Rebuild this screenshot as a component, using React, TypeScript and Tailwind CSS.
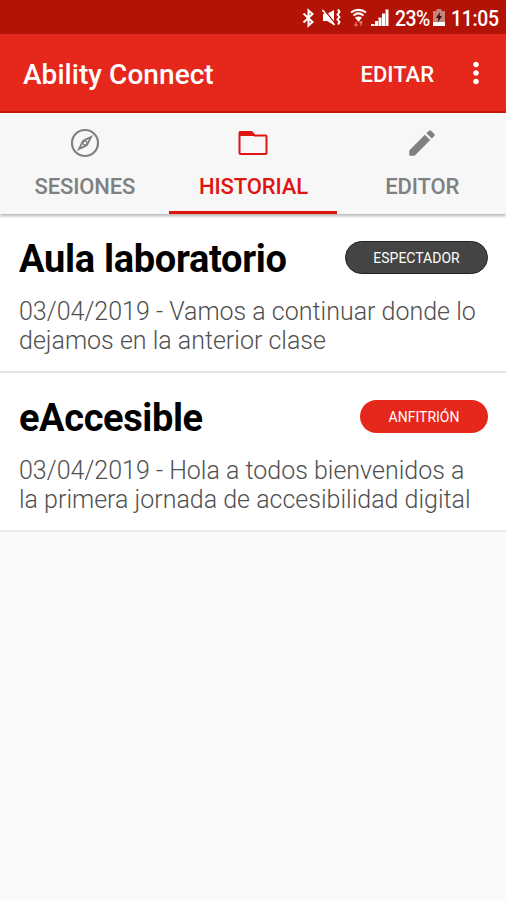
import { MdEdit, MdMoreVert } from "react-icons/md";

const CompassIcon = ({ className }: { className?: string }) => (
  <svg className={className} viewBox="0 0 34 34" fill="none" stroke="currentColor">
    <circle cx="17" cy="17" r="13" strokeWidth="2.200" />
    <path d="M23 11l-4 8-8 4 4-8z" strokeWidth="1.800" />
    <path d="M23 11l-6 2.500-2 1.500M11 23l6-2.500 2-1.500" strokeWidth="1.200" />
    <circle cx="17" cy="17" r="2" strokeWidth="1.300" />
  </svg>
);

const FolderIcon = ({ className }: { className?: string }) => (
  <svg className={className} viewBox="0 0 34 34" fill="none" stroke="currentColor" strokeWidth="2">
    <path d="M5 6h10.500l3 3.500H29.500a1 1 0 0 1 1 1V27a1 1 0 0 1-1 1h-25a1 1 0 0 1-1-1V7a1 1 0 0 1 1-1z" />
    <path d="M4 6.500h11.500l2 2.500H4z" fill="currentColor" />
  </svg>
);

const StatusBar = () => {
  return (
    <div className="flex h-[34px] items-center bg-[#b31207] pl-[302px] pt-px text-white">
      {/* bluetooth */}
      <svg className="h-[20px] w-[13px]" viewBox="0 0 13 20" fill="none" stroke="currentColor" strokeWidth="2">
        <path d="M1.500 5.500l9 8.500-4 3.500V2.500l4 3.500-9 8.500" />
      </svg>

      {/* vibrate / muted */}
      <svg className="ml-[6px] h-[20px] w-[20px]" viewBox="0 0 20 20" fill="none">
        <path d="M2 6h4l7-4v15l-7-4H2z" fill="currentColor" />
        <path d="M3 1.500l11 14" stroke="#b31207" strokeWidth="1.300" />
        <path d="M1.500 2l12 15" stroke="currentColor" strokeWidth="1.700" />
        <path d="M17 1.500l1.500 2.500-2 2.500 2 2.500-2 2.500 2 2.500-1.500 2.500" stroke="currentColor" strokeWidth="2" />
      </svg>

      {/* wifi */}
      <svg className="ml-[9px] h-[20px] w-[17px]" viewBox="0 0 17 20" fill="none" stroke="currentColor">
        <path d="M1 4.500c4.500-3.500 10.500-3.500 15 0M3.500 7.500c3-2.500 7-2.500 10 0" strokeWidth="2.200" />
        <path d="M5 9.500c2-1.500 5-1.500 7 0L8.500 14z" fill="currentColor" stroke="none" />
        <path d="M6 14v4M4.500 16.500L6 18l1.500-1.500M11 18v-4M9.500 15l1.500-1.500 1.500 1.500" stroke="#e87670" strokeWidth="1.200" />
      </svg>

      {/* signal */}
      <svg className="ml-[4px] h-[20px] w-[20px]" viewBox="0 0 20 20" fill="currentColor">
        <path d="M0 16h3.500v2H0zM4 13h3v5H4zM7.500 9.500h3V18h-3zM11 5.500h3V18h-3zM14.500 1.500h3V18h-3z" />
      </svg>

      <span className="ml-[4px] w-[35px] whitespace-nowrap pt-[2px] text-[22px] leading-none font-medium">
        <span className="inline-block origin-left scale-x-[0.88] tracking-[-0.6px]">23%</span>
      </span>

      {/* battery */}
      <svg className="ml-[3px] h-[20px] w-[12px]" viewBox="0 0 12 20">
        <path d="M3.500 1h5v2H12v11H0V3h3.500z" fill="#c4847a" />
        <path d="M0 14h12v4H0z" fill="#fff" />
        <path d="M7 4l-4 6h2.500l-1 5 4.500-7H6.500z" fill="#3b100c" />
      </svg>

      <span className="ml-[6px] whitespace-nowrap pt-[2px] text-[22px] leading-none font-medium">
        <span className="inline-block origin-left scale-x-[0.88] tracking-[-0.3px]">11:05</span>
      </span>
    </div>
  );
};

const AppBar = () => {
  return (
    <header className="flex h-[79px] items-center border-b-2 border-[#c5180d] bg-[#e6271b] pl-[23px] pr-[13px] pt-1 font-medium text-white">
      <h1 className="flex-1 whitespace-nowrap text-[28px] leading-none tracking-[0.05px]">Ability Connect</h1>
      <button className="mr-[25px] whitespace-nowrap text-[22px] leading-none">EDITAR</button>
      <MdMoreVert className="mb-[3px] h-[34px] w-[34px]" />
    </header>
  );
};

const tabs = [
  { label: "SESIONES", Icon: CompassIcon, active: false },
  { label: "HISTORIAL", Icon: FolderIcon, active: true },
  { label: "EDITOR", Icon: MdEdit, active: false },
];

const Tabs = () => {
  return (
    <nav className="relative grid h-[101px] grid-cols-3 bg-[#f7f7f7] shadow-[0_2px_3px_rgba(0,0,0,0.3)]">
      {tabs.map(({ label, Icon, active }) => (
        <button
          key={label}
          className={
            active
              ? "flex flex-col items-center border-b-[3px] border-[#e0150f] pt-[13px] pl-px text-[#e0150f]"
              : "flex flex-col items-center pt-[13px] pl-px text-[#808080]"
          }
        >
          <Icon className="h-[34px] w-[34px]" />
          <span className="mt-4 whitespace-nowrap text-[22px] leading-[22px] font-medium tracking-[-0.15px]">{label}</span>
        </button>
      ))}
    </nav>
  );
};

const App = () => {
  return (
    <div className="min-h-[900px] w-[506px] bg-[#fafafa] font-['Roboto',sans-serif]">
      <StatusBar />
      <AppBar />
      <Tabs />

      <main>
        <article className="h-[159px] border-b-2 border-[#e3e3e3] bg-white pl-[19px] pr-[18px] pt-[27px]">
          <div className="flex h-[33px] items-center justify-between">
            <h2 className="whitespace-nowrap pt-[2px] text-[38px] leading-none font-bold tracking-[-0.3px] text-black">
              Aula laboratorio
            </h2>
            <span className="flex h-[33px] w-[143px] items-center justify-center rounded-full border border-[#222] bg-[#444] pt-[2px] text-[14px] text-white">
              ESPECTADOR
            </span>
          </div>
          <p className="mt-[23px] whitespace-nowrap text-[25px] leading-[29px] font-light text-[#505050]">
            03/04/2019 - Vamos a continuar donde lo
            <br />
            dejamos en la anterior clase
          </p>
        </article>

        <article className="h-[159px] border-b-2 border-[#e9e9e9] bg-white pl-[19px] pr-[18px] pt-[27px]">
          <div className="flex h-[33px] items-center justify-between">
            <h2 className="whitespace-nowrap pt-[2px] text-[38px] leading-none font-bold tracking-[-0.4px] text-black">
              eAccesible
            </h2>
            <span className="flex h-[33px] w-[128px] items-center justify-center rounded-full bg-[#e6271b] pt-[2px] text-[14px] text-white">
              ANFITRIÓN
            </span>
          </div>
          <p className="mt-[23px] whitespace-nowrap text-[25px] leading-[29px] font-light text-[#505050]">
            03/04/2019 - Hola a todos bienvenidos a
            <br />
            la primera jornada de accesibilidad digital
          </p>
        </article>
      </main>
    </div>
  );
};

export default App;
